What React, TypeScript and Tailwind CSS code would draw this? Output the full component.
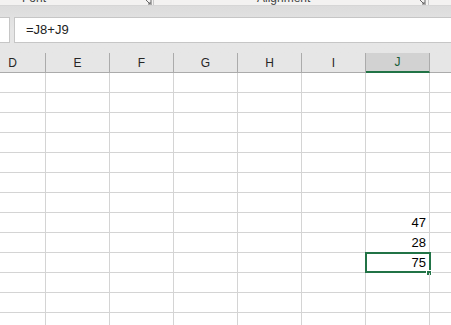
import * as React from 'react'

const columns = ['D', 'E', 'F', 'G', 'H', 'I', 'J']

const values: Record<number, string> = {
    7: '47',
    8: '28',
    9: '75'
}

function Launcher() {
    return (
        <svg width="9" height="9" viewBox="0 0 9 9" className="block shrink-0">
            <path d="M1 1h7v7" fill="none" stroke="#666" strokeWidth="1" />
            <path d="M3 3l4 4M5 7h2V5" fill="none" stroke="#666" strokeWidth="1" />
        </svg>
    )
}

export default function App() {
    const rows = Array.from({ length: 13 }, (_, i) => i)

    return (
        <div className="w-[451px] h-[325px] overflow-hidden bg-white font-['Liberation_Sans',Arial,sans-serif] select-none">
            {/* ribbon group labels, only their lower edge shows */}
            <div className="h-[6px] bg-[#f3f2f1] border-b border-[#d6d6d6] overflow-hidden">
                <div className="flex items-end h-[10px] -mt-[4px] text-[12px] leading-none text-[#444]">
                    <span className="w-[143px] pl-[22px] pb-[2px] shrink-0">Font</span>
                    <Launcher />
                    <span className="w-px h-full bg-[#c8c8c8] ml-[1px] shrink-0" />
                    <span className="w-[263px] pl-[103px] pb-[2px] shrink-0">Alignment</span>
                    <Launcher />
                    <span className="w-px h-full bg-[#c8c8c8] ml-[2px] shrink-0" />
                </div>
            </div>

            {/* formula bar band */}
            <div className="h-[47px] bg-gradient-to-b from-[#dcdcdc] via-[#e6e6e6] to-[#e6e6e6] pt-[11px] flex gap-[4px]">
                <div className="w-[10px] h-[26px] bg-white border border-l-0 border-[#c6c6c6]" />
                <div className="flex-1 h-[26px] bg-white border border-r-0 border-[#c6c6c6] flex items-center pl-[11px] text-[13px] text-[#222]">
                    =J8+J9
                </div>
            </div>

            {/* column header */}
            <div className="grid grid-cols-[46px_repeat(6,64px)_1fr] h-[20px] bg-[#e6e6e6] border-b border-[#ababab]">
                {columns.map(c => (
                    <div
                        key={c}
                        className={
                            c === 'J'
                                ? 'border-r border-[#ababab] bg-[#d2d2d2] border-b-2 border-b-[#217346] flex items-center justify-center text-[12px] text-[#185c37] -mb-px'
                                : c === 'D'
                                  ? 'border-r border-[#ababab] flex items-center justify-center text-[12px] text-[#262626] pr-[20px]'
                                  : 'border-r border-[#ababab] flex items-center justify-center text-[12px] text-[#262626]'
                        }
                    >
                        {c}
                    </div>
                ))}
                <div />
            </div>

            {/* cells */}
            {rows.map(r => (
                <div key={r} className="grid grid-cols-[46px_repeat(6,64px)_1fr] h-[20px] border-b border-[#d4d4d4]">
                    {columns.map(c => (
                        <div
                            key={c}
                            className="border-r border-[#d4d4d4] relative flex items-end justify-end pr-[3px] pb-[1px] text-[13px] leading-[17px] text-black"
                        >
                            {c === 'J' && values[r]}
                            {c === 'J' && r === 9 && (
                                <>
                                    <div className="absolute left-[-1px] top-[-1px] w-[66px] h-[21px] border-2 border-[#217346]" />
                                    <div className="absolute right-[-3px] bottom-[-4px] w-[6px] h-[6px] bg-[#217346] border border-white" />
                                </>
                            )}
                        </div>
                    ))}
                    <div />
                </div>
            ))}
        </div>
    )
}
